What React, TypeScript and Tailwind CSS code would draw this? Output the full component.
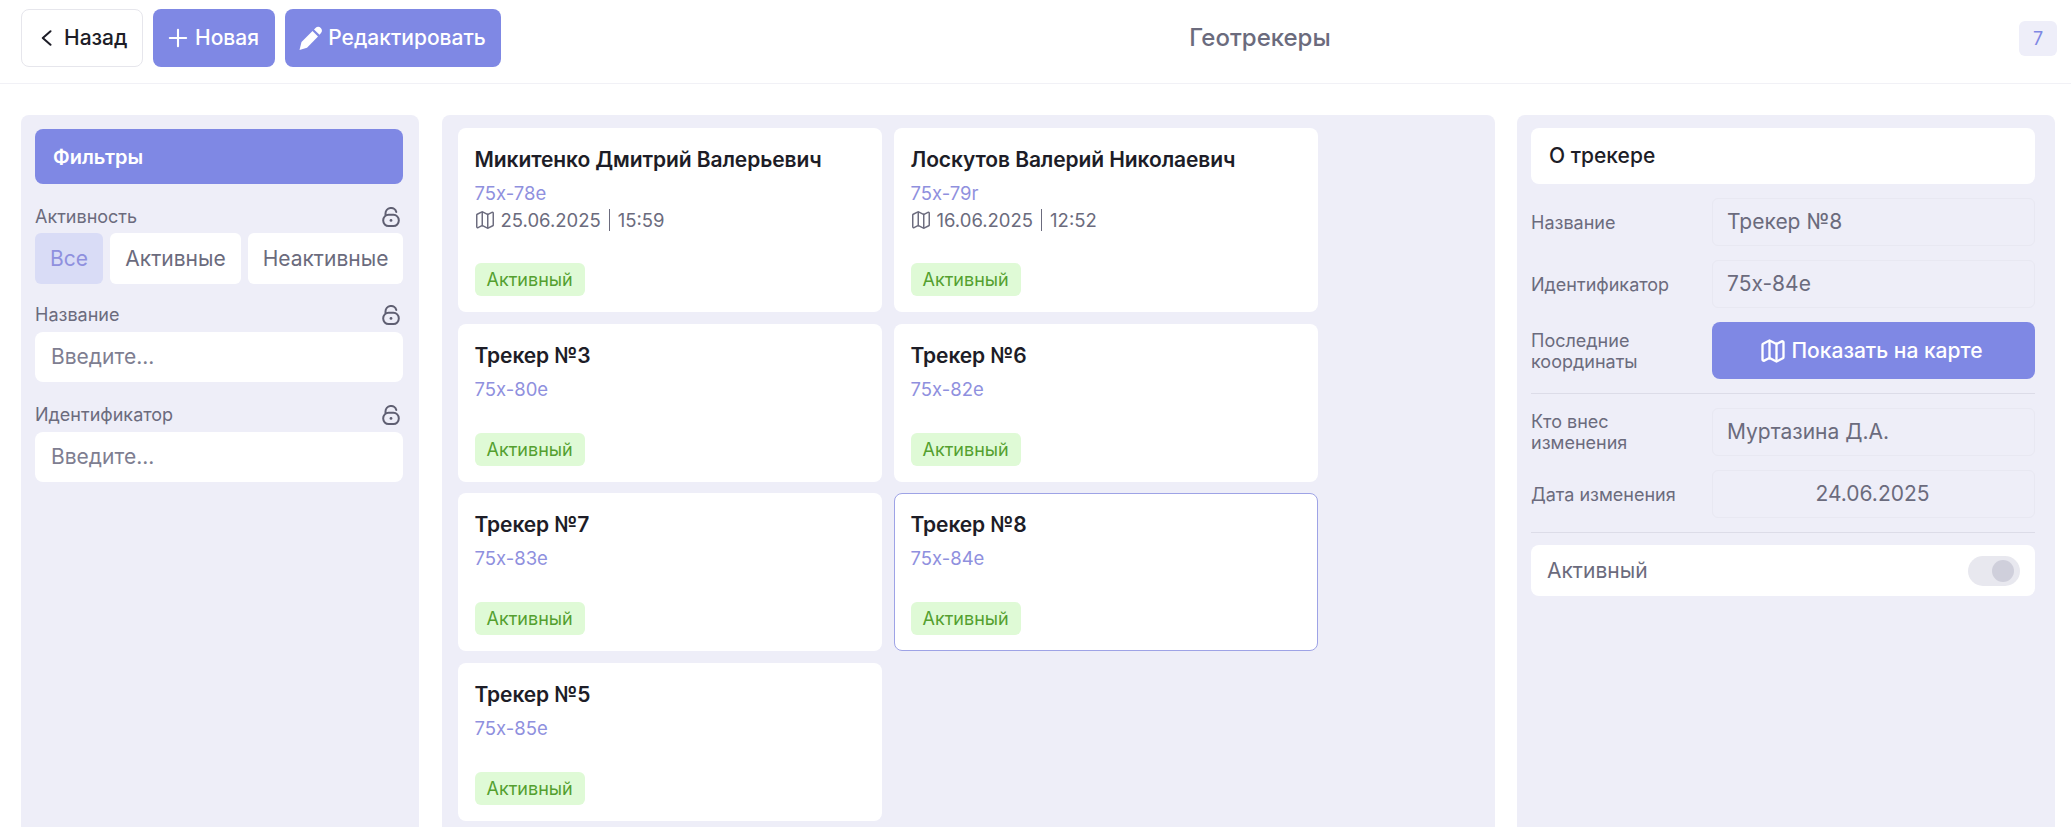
import React from "react";
import { Plus, Map as MapIcon } from "lucide-react";

function Lock() {
  return (
    <svg width="18" height="20" viewBox="0 0 18 20" fill="none" stroke="#5f5f72" strokeWidth="2" strokeLinecap="round">
      <path d="M3.500 8V6.500a5.500 5.500 0 0 1 10.800-1.500" />
      <rect x="1.200" y="7.800" width="15.600" height="11.200" rx="5.400" />
      <circle cx="9" cy="13.400" r="1.400" fill="#5f5f72" stroke="none" />
    </svg>
  );
}

function Pen() {
  return (
    <svg width="25" height="25" viewBox="0 0 25 25" fill="white">
      <path d="M1.500 24l2-8L14.500 5l5.500 5.500L9 21.800z" />
      <path d="M16 3.500L17.500 2c1.600-1.600 3.800-1.600 5.300 0s1.600 3.700 0 5.300L21.500 8.800z" />
    </svg>
  );
}

function Back() {
  return (
    <svg width="11" height="16" viewBox="0 0 11 16" fill="none" stroke="#1d1d27" strokeWidth="2" strokeLinecap="round" strokeLinejoin="round">
      <path d="M9.500 1.200L1.800 8l7.700 6.800" />
    </svg>
  );
}

function Card({ title, id, date, time, selected }: { title: string; id: string; date?: string; time?: string; selected?: boolean }) {
  return (
    <div className={`bg-white rounded-lg pr-4 flex flex-col ${date ? "h-[184px]" : "h-[158px]"} ${selected ? "border border-[#9ea3e6] pl-[15.500px] pt-[15px]" : "pl-[16.500px] pt-[16px]"}`}>
      <div className="text-[21px] leading-[32px] font-semibold text-[#1d1d27] tracking-[-0.1px]">{title}</div>
      <div className="text-[18.500px] leading-[22px] mt-[6px] text-[#8f90de]">{id}</div>
      {date && (
        <div className="flex items-center text-[18.500px] leading-[26px] text-[#6b6b7d] mt-[3px]">
          <MapIcon size={22} strokeWidth={1.6} className="mr-[5px] -ml-[1px]" />
          <span>{date}</span>
          <span className="w-px h-[22px] bg-[#6b6b7d] mx-[8px]" />
          <span>{time}</span>
        </div>
      )}
      <div className={`mt-auto self-start h-[33px] px-3 rounded-md bg-[#dffad6] text-[#54a02f] text-[18px] flex items-center ${selected ? "mb-[15px]" : "mb-4"}`}>Активный</div>
    </div>
  );
}

function FilterLabel({ children }: { children: React.ReactNode }) {
  return (
    <div className="flex items-center justify-between text-[18px] text-[#6b6b7d] pr-[3px] h-[24px]">
      <span className="-mt-[2px]">{children}</span>
      <Lock />
    </div>
  );
}

function Row({ label, children, center }: { label: React.ReactNode; children: React.ReactNode; center?: boolean }) {
  return (
    <div className="flex items-center">
      <div className="w-[181px] shrink-0 text-[18px] leading-[21px] text-[#6b6b7d]">{label}</div>
      <div className={`flex-1 h-[48px] rounded-md border border-[#e8e8f2] pl-[14px] pr-4 flex items-center text-[21px] text-[#6b6b7d] ${center ? "justify-center" : ""}`}>{children}</div>
    </div>
  );
}

export default function App() {
  return (
    <div className="h-[827px] w-[2071px] bg-white flex flex-col overflow-hidden font-['Inter',sans-serif]">
      <header className="h-[84px] shrink-0 border-b border-[#f1f1f6] pl-[21px] pr-[14px] pb-[7px] flex items-center">
        <button className="h-[58px] w-[122px] rounded-lg border border-[#e6e6ec] bg-white flex items-center pl-[19px] gap-[12px] text-[21px] font-medium text-[#1d1d27]">
          <Back />
          Назад
        </button>
        <button className="ml-[10px] h-[58px] w-[122px] rounded-lg bg-[#7f88e4] flex items-center justify-center gap-[3px] pr-[5px] text-[21px] font-medium text-white">
          <Plus size={28} strokeWidth={1.8} />
          Новая
        </button>
        <button className="ml-[10px] h-[58px] w-[216px] rounded-lg bg-[#7f88e4] flex items-center justify-center gap-[5px] pr-[2px] text-[21px] font-medium text-white">
          <Pen />
          Редактировать
        </button>
        <div className="flex-1 text-center text-[24px] font-medium text-[#6b6b7d]">Геотрекеры</div>
        <div className="w-[38px] h-[35px] rounded-md bg-[#eeeef9] text-[#7f88e4] text-[18px] flex items-center justify-center">7</div>
      </header>
      <main className="flex-1 flex pl-[21px] pr-4 pt-[31px] min-h-0">
        <aside className="w-[398px] shrink-0 bg-[#eeeef8] rounded-t-lg pt-[14px] pl-[14px] flex flex-col">
          <div className="h-[55px] w-[368px] rounded-lg bg-[#7f88e4] text-white text-[20px] font-semibold flex items-center pl-[18px]">Фильтры</div>
          <div className="mt-[21px] w-[368px]">
            <FilterLabel>Активность</FilterLabel>
            <div className="mt-[4px] flex gap-[7px] text-[21px] h-[51px]">
              <div className="w-[68px] rounded-md bg-[#d9dcf6] text-[#8f90de] flex items-center justify-center">Все</div>
              <div className="w-[131px] rounded-md bg-white text-[#6b6b7d] flex items-center justify-center">Активные</div>
              <div className="w-[155px] rounded-md bg-white text-[#6b6b7d] flex items-center justify-center">Неактивные</div>
            </div>
          </div>
          <div className="mt-[19px] w-[368px]">
            <FilterLabel>Название</FilterLabel>
            <div className="mt-[5px] h-[50px] rounded-lg bg-white pl-4 flex items-center text-[21px] text-[#7e7e91]">Введите...</div>
          </div>
          <div className="mt-[21px] w-[368px]">
            <FilterLabel>Идентификатор</FilterLabel>
            <div className="mt-[5px] h-[50px] rounded-lg bg-white pl-4 flex items-center text-[21px] text-[#7e7e91]">Введите...</div>
          </div>
        </aside>
        <section className="ml-[23px] w-[1053px] shrink-0 bg-[#eeeef8] rounded-t-lg pt-[13px] px-[16px]">
          <div className="grid grid-cols-[424px_424px] gap-x-3 gap-y-[11.5px] content-start">
            <Card title="Микитенко Дмитрий Валерьевич" id="75x-78e" date="25.06.2025" time="15:59" />
            <Card title="Лоскутов Валерий Николаевич" id="75x-79r" date="16.06.2025" time="12:52" />
            <Card title="Трекер №3" id="75x-80e" />
            <Card title="Трекер №6" id="75x-82e" />
            <Card title="Трекер №7" id="75x-83e" />
            <Card title="Трекер №8" id="75x-84e" selected />
            <Card title="Трекер №5" id="75x-85e" />
          </div>
        </section>
        <aside className="ml-[22px] flex-1 bg-[#eeeef8] rounded-t-lg pt-[13px] pl-[14px] pr-[20px] flex flex-col">
          <div className="h-[56px] rounded-lg bg-white pl-[18px] flex items-center text-[21px] font-medium text-[#1d1d27]">О трекере</div>
          <div className="mt-[14px] flex flex-col gap-[14px]">
            <Row label="Название">Трекер №8</Row>
            <Row label="Идентификатор">75x-84e</Row>
            <div className="flex items-center">
              <div className="w-[181px] shrink-0 text-[18px] leading-[21px] text-[#6b6b7d]">Последние<br />координаты</div>
              <div className="flex-1 h-[57px] rounded-lg bg-[#7f88e4] text-white text-[21px] font-medium flex items-center justify-center gap-[4px] pr-[5px]">
                <MapIcon size={28} strokeWidth={2} />
                Показать на карте
              </div>
            </div>
          </div>
          <div className="mt-[14px] h-px bg-[#dcdce8]" />
          <div className="mt-[14px] flex flex-col gap-[14px]">
            <Row label={<>Кто внес<br />изменения</>}>Муртазина Д.А.</Row>
            <Row label="Дата изменения" center>24.06.2025</Row>
          </div>
          <div className="mt-[14px] h-px bg-[#dcdce8]" />
          <div className="mt-[12px] h-[51px] rounded-lg bg-white pl-4 pr-[15px] flex items-center justify-between text-[21px] text-[#6b6b7d]">
            Активный
            <div className="w-[52px] h-[30px] rounded-full bg-[#e8e8ef] flex items-center justify-end pr-[6px]">
              <div className="w-[22px] h-[22px] rounded-full bg-[#cfcfdb]" />
            </div>
          </div>
        </aside>
      </main>
    </div>
  );
}
